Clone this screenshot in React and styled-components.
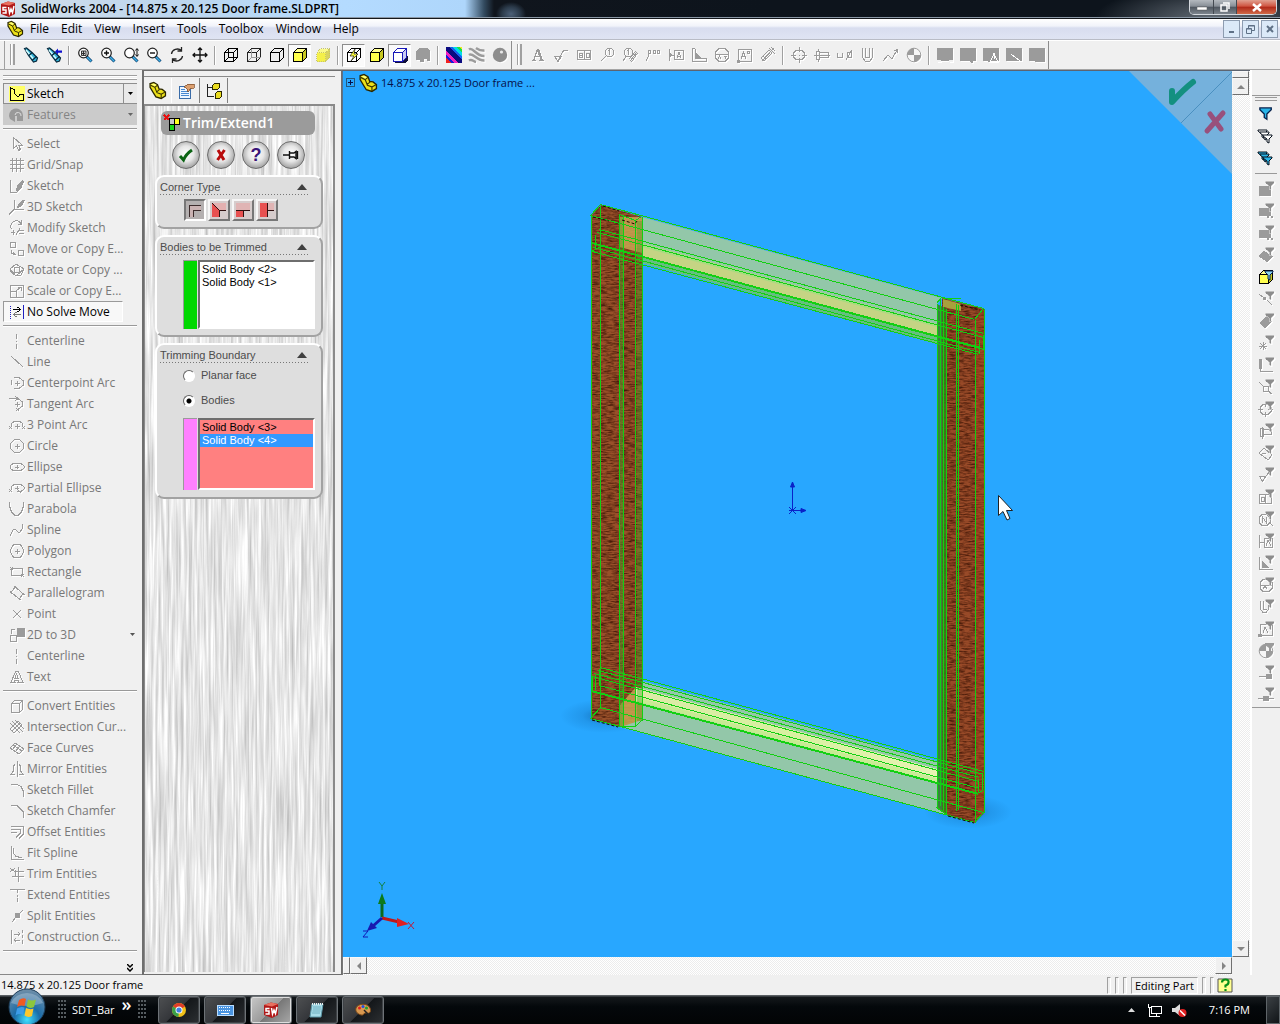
import React, { useState } from 'react';
import styled, { createGlobalStyle, css } from 'styled-components';

const ui = '"Open Sans", "Noto Sans", sans-serif';
const classic = '"Liberation Sans", Arial, sans-serif';

const GlobalStyle = createGlobalStyle`
  *, *::before, *::after { box-sizing: border-box; }
  html, body { margin: 0; padding: 0; }
  body { background: #f0f0f0; font: 12px/16px ${ui}; color: #000; }
  button { font: inherit; color: inherit; background: none; border: 0; padding: 0; margin: 0; cursor: default; }
  ul { list-style: none; margin: 0; padding: 0; }
  h1, h2 { margin: 0; font: inherit; }
  svg { display: block; flex: none; }
`;

const Shell = styled.div`
  display: flex;
  flex-direction: column;
  min-height: 100vh;
  overflow: hidden;
`;

/* ---------- icons ---------- */

const IconSvg = styled.svg`
  width: ${p => p.$size}px;
  height: ${p => p.$size}px;
  overflow: visible;
  ${p => p.$off && css`filter: drop-shadow(1px 1px 0 #fff);`}
`;

const GREY = '#9b9b9b';

function Icon({ d, f, c = GREY, fc, w = 1, size = 16, off, crisp = true, children }) {
  return (
    <IconSvg viewBox="0 0 16 16" $size={size} $off={off} aria-hidden="true" shapeRendering={crisp ? 'crispEdges' : 'auto'}>
      {f && <path d={f} fill={fc || c} />}
      {d && <path d={d} fill="none" stroke={c} strokeWidth={w} />}
      {children}
    </IconSvg>
  );
}

const CUBE = 'M1.5 5.5h9v9h-9zM1.5 5.5l4-4h9l-4 4M14.5 1.5v9l-4 4';
const FUNNEL = 'M1 1h13v2l-5 5v6l-3 -2v-4l-5-5z';

function PartIcon({ size = 18 }) {
  return (
    <Icon size={size} crisp={false}>
      <path d="M1 1.500L4.500 .5l3.500 2 1.500 4L12.500 7l3 2.500v3.500l-4 2.500-5-1.500L4 10 1 5z" fill="#ece018" stroke="#2a2600" strokeWidth="1.200" />
      <path d="M1.500 3l4 2 2 5 4 1.500v3.500M5.500 5l2.500-2M7 9.500l3-2.500M11.500 11.500l3.500-2" fill="none" stroke="#3a3400" strokeWidth="1" />
      <path d="M2 2l2.500-.7 2.500 1.400L5.500 4z" fill="#ffff80" />
    </Icon>
  );
}

function Torch({ arrow }) {
  return (
    <Icon crisp={false}>
      <path d="M1.500 1.500l2-.5 5.500 4.500 5.500 5.500-1 3-3 1-5-6.500z" fill="#36b4d8" stroke="#06283c" strokeWidth="1.200" />
      <path d="M3 3l7.500 9" stroke="#d4fdff" strokeWidth="1.500" />
      <path d="M6 8.500l3-3M9 13.500l4.500-4" stroke="#06283c" strokeWidth="1.300" />
      {arrow && <path d="M9 4.500l3-3v2h4v2.200h-4v2z" fill="#1010d0" />}
    </Icon>
  );
}

function Lens({ kind }) {
  return (
    <Icon crisp={false}>
      <path d="M9.500 9.500l5 5" stroke="#0b3f70" strokeWidth="3" />
      <path d="M10 10l4.200 4.200" stroke="#3fb2e6" strokeWidth="1.500" />
      <circle cx="6.500" cy="6" r="4.800" fill="#fff" stroke="#222" strokeWidth="1.200" />
      {kind === 'fit' && <path d="M4.500 4h4.500v4.500H4.500zM5 6.500h3M6.500 4v4" fill="#ccc" stroke="#222" strokeWidth=".9" />}
      {kind === 'in' && <path d="M4 6h5M6.500 3.500v5" stroke="#111" strokeWidth="1.400" />}
      {kind === 'out' && <path d="M4 6h5" stroke="#111" strokeWidth="1.400" />}
      {kind === 'drag' && <path d="M14 2v7M12.500 3.500L14 1.500l1.500 2M12.500 7.500L14 9.500l1.500-2" fill="none" stroke="#111" />}
    </Icon>
  );
}

function Cube({ fill = '#fff', side, top, c = '#000', extra, shadow, dash }) {
  return (
    <Icon>
      {shadow && <path d="M3 16l2-3h6l5-5v5l-3 3z" fill="#10103c" />}
      <path d="M1.500 5.500h9v9h-9z" fill={fill} />
      <path d="M1.500 5.500l4-4h9l-4 4z" fill={top || fill} />
      <path d="M14.500 1.500v9l-4 4v-9z" fill={side || fill} />
      <path d={CUBE} fill="none" stroke={c} strokeDasharray={dash} />
      {extra}
    </Icon>
  );
}

const annotationIcons = {
  note: { f: 'M2 14v-1h1L7 2h2l4 11h1v1H9v-1h1.500l-1-3h-4l-1 3H6v1zM6 9h3L7.500 4.500z' },
  finish: { d: 'M1.500 9.500h7l-3.500 5zM5 14L10.500 3.500H15' },
  gtol: { d: 'M1.500 3.500h13v9h-13zM8 3.500v9M3 6h3v4H3zM3 8h3M10 6h3v4h-3z' },
  balloon: { d: 'M8.500 1.500h4l2 2v4l-2 2h-4l-2-2v-4zM9.500 4l1-1v5M6.500 9.500L2 14' },
  balloons: { d: 'M4.500 1.500h4l2 2v4l-2 2h-4l-2-2v-4zM5.500 4l1-1v5M4 9.500L1 14M8 14l7-9M9.500 15l6-9M7 12l7-8' },
  stacked: { d: 'M3.500 3.500h2v3h-2zM8.500 3.500h2v3h-2zM12.500 3.500h2v3h-2zM3.500 6v3L1 14' },
  datum: { d: 'M1.500 2v12M2 8h4M6.500 3.500h9v9h-9zM9 11l2-6 2 6M9.500 9h3', f: 'M2 6l3 2-3 2z' },
  weld: { d: 'M1.500 1.500v13H15v-3H5l-1-10z', f: 'M4 5l6 6H4z' },
  datumTarget: { d: 'M5 1.500h6l3.500 3.500v6L11 14.500H5L1.500 11V5zM1.500 7.500h13M4 12l1.500-3L7 12M9.500 9h3M11 9v3' },
  area: { d: 'M1.500 2.500h13v12h-13zM4 12l2.500-7L9 12M5 9h3M10.500 4.500h2v2h-2z', f: 'M0 13h3v3H0z' },
  cosmetic: { d: 'M1 11l8-8 3 3-8 8zM3 9l3 3M9 1l6 6M11 0l4 4M2 14l12-13' },
  center: { d: 'M5 3.500h6L13.500 6v4L11 12.500H5L2.500 10V6zM8 0v5M8 11v5M0 8h5M11 8h5M7.500 8h1' },
  bolt: { d: 'M2.500 4.500h3v8h-3zM5.500 5.500h9v5h-9zM0 8.500h16M4.500 2v3M4.500 12v3' },
  depth: { d: 'M.5 6v4h5V6M10 5.500h4.500v5H10zM9 13l6-10' },
  hole: { d: 'M2.500 1v9l2.500 4h5l2.500-4V1M5.500 1v9h4V1' },
  path: { d: 'M0 14l5-6 4 4 5-9M11 4l3-1.500L15 6' },
};

const Quadrant = ({ funnel }) => (
  <Icon off crisp={false}>
    <circle cx="8" cy="8" r="6.800" fill="#f6f6f6" stroke={GREY} strokeWidth="1" />
    <path d="M8 8V1.200A6.800 6.800 0 0 0 1.200 8zM8 8v6.800A6.800 6.800 0 0 0 14.800 8z" fill={GREY} />
    {funnel && <path d="M7 0h9v2l-3 3v4l-2-1V5L7 2z" fill={GREY} />}
  </Icon>
);

const blockShapes = ['', 'M9 13h5l-1 3h-2z', 'M5 14h6v1H5z', '', 'M6 14h10v1H6z'];

const toolbarGroups = [
  [<Torch />, <Torch arrow />],
  [
    <Lens kind="fit" />, <Lens kind="in" />, <Lens kind="drag" />, <Lens kind="out" />,
    <Icon c="#222" crisp={false} w={1.300} d="M2.500 7a6 5.500 0 0 1 10-3.500M13.500 9a6 5.500 0 0 1-10 3.500M12.500 0v4h-4M3.500 16v-4h4" />,
    <Icon c="#111" crisp={false} w={1.300} d="M8 1v14M1 8h14M6 3l2-2 2 2M6 13l2 2 2-2M3 6L1 8l2 2M13 6l2 2-2 2" />,
  ],
  [
    <Cube fill="none" extra={<path d="M5.500 1.500v9h9M5.500 10.500l-4 4" fill="none" stroke="#000" />} />,
    <Cube fill="none" c="#222" extra={<path d="M5.500 1.500v9h9M5.500 10.500l-4 4" fill="none" stroke="#999" />} />,
    <Cube fill="none" />,
    { pressed: true, icon: <Cube fill="#ffff4a" side="#c8c820" top="#ffff90" /> },
    <Cube fill="#f4f04a" side="#d8d460" top="#fafa8c" c="#c6c46c" dash="1 1" />,
  ],
  [
    { pressed: true, icon: <Cube fill="#fff" extra={<path d="M9 2L4 9h4l-3 5 7-7H8z" fill="#ffff40" stroke="#000" strokeWidth=".6" shapeRendering="auto" />} /> },
    <Cube fill="#ffff4a" side="#c8c820" top="#ffff90" />,
    { pressed: true, icon: <Cube shadow c="#1818b8" fill="#fff" side="#c8ccf4" /> },
    <Icon off f="M1 4l4-3h7l3 3v10h-3v-2H9v3H5v-2H1z" />,
  ],
  [
    <Icon>
      <path d="M0 0h16v16H0z" fill="#f020c0" />
      <path d="M0 0h3l13 13v3h-3L0 4z" fill="#0b0b80" />
      <path d="M3 0h3l10 9v4z" fill="#1860f0" /><path d="M6 0h4l6 6v3z" fill="#00d8e8" />
      <path d="M10 0h3l3 3v3z" fill="#20e040" /><path d="M13 0h3v3z" fill="#f0e820" />
      <path d="M0 8l8 8H5L0 11z" fill="#1818d8" /><path d="M0 11l5 5H0z" fill="#f02020" />
    </Icon>,
    <Icon off crisp={false} w={2.500} d="M0 2.500c4-3 7 7 15.500 6.500M0 8c4-3 7 6 15.500 5.500M0 13.500c3-2 4 1 7 1.500M7 1c3 2 4 3 8.500 2.500" />,
    <Icon off crisp={false}><circle cx="8" cy="8" r="7.200" fill="#8d8d8d" /><circle cx="9.500" cy="5" r="1.600" fill="#e8e8e8" /></Icon>,
  ],
];

const annotationGroups = [
  ['note', 'finish', 'gtol', 'balloon', 'balloons', 'stacked', 'datum', 'weld', 'datumTarget', 'area', 'cosmetic'],
  ['center', 'bolt', 'depth', 'hole', 'path', 'quadrant'],
];

/* ---------- title bar ---------- */

const TitleBar = styled.header`
  display: flex;
  justify-content: space-between;
  height: 19px;
  padding: 0 3px 0 0;
  border-bottom: 1px solid #14181c;
  box-shadow: inset 0 -1px 0 #8b98a6;
  background:
    radial-gradient(ellipse 15px 12px at 511px 14px, #4c6078 0, #2b3a4a 60%, transparent 100%),
    radial-gradient(ellipse 120px 36px at 1214px 20px, rgba(150,160,170,.65) 0, transparent 100%),
    linear-gradient(90deg, #d2deea 0, #bcd6ee 180px, #b4dbff 345px, #aed6fb 465px, #334b60 484px, #10151d 494px, #0d141c 60%);
`;
const TitleText = styled.h1`
  display: flex;
  align-items: center;
  gap: 5px;
  height: 18px;
  font-size: 12px;
  font-weight: 600;
  white-space: nowrap;
`;
const WindowButtons = styled.div`
  display: flex;
  height: 15px;
  border: 1px solid #d3d8dd;
  border-top: 0;
  border-radius: 0 0 5px 5px;
  overflow: hidden;
`;
const WindowButton = styled.button`
  display: grid;
  place-items: center;
  width: ${p => (p.$close ? 40 : 23)}px;
  background: ${p => (p.$close
    ? 'linear-gradient(#e0a090 0, #cf5440 45%, #b02818 50%, #d06a48)'
    : 'linear-gradient(#b4b9bf 0, #878e96 45%, #4f565f 50%, #7d858d)')};
  & + & { border-left: 1px solid #434950; }
`;

/* ---------- menu bar ---------- */

const MenuBar = styled.nav`
  display: flex;
  align-items: center;
  height: 21px;
  padding: 0 2px 0 7px;
  background: linear-gradient(#fff 0, #f1f3fa 35%, #d8ddef 45%, #dfe4f3);
  border-bottom: 1px solid #b9bcc6;
`;
const MenuItems = styled.div`
  display: flex;
  flex: 1;
  gap: 12px;
  padding-left: 7px;
`;
const MdiButtons = styled.div`
  display: flex;
  gap: 2px;
`;
const MdiButton = styled.button`
  display: grid;
  place-items: center;
  width: 17px;
  height: 18px;
  border: 1px solid #8d9cb0;
  background: #dbe9f8;
`;

/* ---------- tool bar ---------- */

const ToolRow = styled.div`
  display: flex;
  height: 30px;
  border-top: 1px solid #fff;
  border-bottom: 1px solid #a5a5a5;
  padding-left: 4px;
`;
const ToolBar = styled.div`
  display: flex;
  align-items: center;
  padding-left: 14px;
  border-right: 1px solid #8c8c8c;
  border-left: ${p => (p.$first ? 1 : 0)}px solid #a0a0a0;
  position: relative;
  &::before {
    content: '';
    position: absolute;
    left: 5px;
    top: 3px;
    width: 5px;
    height: 21px;
    border: solid #a0a0a0;
    border-width: 0 1px;
    background: linear-gradient(90deg, #fff 1px, transparent 1px 2px, #a0a0a0 2px 3px, transparent 3px);
  }
`;
const ToolButton = styled.button`
  display: grid;
  place-items: center;
  width: 23px;
  height: 23px;
  border: 1px solid transparent;
  ${p => p.$pressed && css`
    border-color: #8c8c8c #fff #fff #8c8c8c;
    background: #fafafa;
  `}
`;
const ToolSep = styled.span`
  width: 8px;
  height: 19px;
  background: linear-gradient(90deg, transparent 3px, #a0a0a0 3px 4px, #fff 4px 5px, transparent 5px);
`;

/* ---------- body ---------- */

const Body = styled.main`
  display: flex;
  flex: 1;
`;

const Sidebar = styled.aside`
  display: flex;
  flex-direction: column;
  width: 142px;
  padding: 5px 5px 0 3px;
  border-bottom: 1px solid #888;
`;
const Grip = styled.div`
  height: 5px;
  margin-bottom: 3px;
  border: solid #a0a0a0;
  border-width: 1px 0;
  background: linear-gradient(#fff 1px, transparent 1px 2px, #fff 2px);
`;
const Tab = styled.div`
  display: flex;
  height: 21px;
  background: ${p => (p.$on ? '#e9e9e9' : '#cbcbcb')};
  color: ${p => (p.$on ? '#000' : '#848484')};
  border: solid ${p => (p.$on ? '#8e8e8e' : '#cbcbcb')};
  border-width: 1px 0 1px 1px;
  & > button:first-child { flex: 1; display: flex; align-items: center; gap: 2px; padding-left: 5px; }
  & > button:last-child {
    display: grid;
    place-items: center;
    width: 14px;
    border-left: 1px solid ${p => (p.$on ? '#8e8e8e' : 'transparent')};
  }
`;
const Rule = styled.hr`
  width: 100%;
  height: 2px;
  margin: 3px 0;
  border: 0;
  border-top: 1px solid #999;
  border-bottom: 1px solid #fff;
`;
const CommandList = styled.ul``;
const Command = styled.button`
  display: flex;
  align-items: center;
  width: 100%;
  height: 21px;
  gap: 2px;
  padding: 0 2px 0 6px;
  color: #787878;
  white-space: nowrap;
  & > span { flex: 1; text-align: left; }
  ${p => p.$on && css`
    width: 120px;
    color: #000;
    border: 1px solid #fff;
    border-color: #9a9a9a #fff #fff #9a9a9a;
    background: #f8f8f8;
    padding-left: 5px;
  `}
`;
const More = styled.button`
  align-self: flex-end;
  margin-top: auto;
  width: 14px;
  height: 12px;
  display: grid;
  place-items: center;
`;

/* ---------- property manager ---------- */

const Manager = styled.section`
  display: flex;
  flex-direction: column;
  width: 200px;
  padding: 5px 6px 2px 0;
  border: solid #6e6e6e;
  border-width: 1px 1px 1px 2px;
  background: #f0f0f0;
`;
const ManagerTabs = styled.div`
  display: flex;
  align-items: center;
  height: 28px;
  border-top: 1px solid #8a8a8a;
`;
const ManagerTab = styled.button`
  display: grid;
  place-items: center;
  width: 28px;
  height: 25px;
  border-right: 1px solid ${p => (p.$edge ? '#808080' : '#fff')};
`;
const Metal = styled.div`
  position: relative;
  flex: 1;
  border: solid #8a8a8a;
  border-width: 2px 2px 0 1px;
  background: #e6e6e6;
  padding: 5px 10px 0 12px;
`;
const Texture = styled.svg`
  position: absolute;
  inset: 0;
  width: 100%;
  height: 100%;
`;
const ManagerContent = styled.div`
  position: relative;
  display: flex;
  flex-direction: column;
  gap: 6px;
`;
const Feature = styled.h2`
  display: flex;
  align-items: center;
  gap: 3px;
  height: 24px;
  margin: 0 8px 0 4px;
  padding-left: 3px;
  border-radius: 6px;
  background: #9b9b9b;
  color: #fff;
  font: 600 14px/20px ${ui};
`;
const Actions = styled.div`
  display: flex;
  gap: 7px;
  padding-left: 15px;
`;
const RoundButton = styled.button`
  display: grid;
  place-items: center;
  width: 28px;
  height: 28px;
  border: 1px solid #6c6c6c;
  border-radius: 50%;
  background: radial-gradient(circle at 50% 45%, #fff 0, #e6e6e6 40%, #a2a2a2 75%, #777 100%);
  font: bold 18px/20px ${classic};
  color: #3a1478;
`;
const Group = styled.section`
  height: ${p => p.$height}px;
  padding: 2px 6px 0 3px;
  border: 2px solid #fff;
  border-color: #fff #a2a2a2 #a2a2a2 #fff;
  border-radius: 9px;
  background: #dedede;
  margin-left: -2px;
  font: 11px/13px ${classic};
  color: #4c4c4c;
`;
const GroupHeader = styled.button`
  display: flex;
  justify-content: space-between;
  align-items: center;
  width: 100%;
  height: 16px;
  padding: 0 8px 0 0;
  background: repeating-linear-gradient(90deg, #777 0 1px, transparent 1px 3px) left bottom / 148px 1px no-repeat;
`;
const CornerRow = styled.div`
  display: flex;
  gap: 2px;
  padding: 4px 0 0 24px;
`;
const CornerButton = styled.button`
  display: grid;
  place-items: center;
  width: 22px;
  height: 22px;
  border: 2px solid;
  border-color: ${p => (p.$on ? '#777 #fff #fff #777' : '#f6f6f6 #777 #777 #f6f6f6')};
  background: ${p => (p.$on ? '#b4b0b0' : '#d6cccc')};
`;
const Selection = styled.div`
  display: flex;
  gap: 1px;
  height: ${p => p.$height}px;
  margin: 5px 0 0 23px;
`;
const Swatch = styled.span`
  width: 14px;
  background: ${p => p.$color};
  border: solid #9a9a9a;
  border-width: 1px 0 0 1px;
`;
const ListBox = styled.ul`
  flex: 1;
  padding: 1px 0;
  border: 2px solid;
  border-color: #6e6e6e #fff #fff #6e6e6e;
  background: ${p => p.$color};
  color: #000;
`;
const ListOption = styled.li`
  height: 13px;
  padding-left: 2px;
  ${p => p.$on && css`background: #3399ff; color: #fff;`}
`;
const Choice = styled.label`
  display: flex;
  align-items: center;
  gap: 6px;
  height: 25px;
  padding-left: 23px;
`;
const Radio = styled.input`
  appearance: none;
  width: 12px;
  height: 12px;
  margin: 0;
  border: 1px solid;
  border-color: #666 #fff #fff #666;
  border-radius: 50%;
  background: #fff;
  &:checked { background: radial-gradient(circle, #000 0 2px, #fff 3px); }
`;

/* ---------- viewport ---------- */

const ViewArea = styled.section`
  flex: 1;
  display: grid;
  grid-template: minmax(0, 1fr) 18px / minmax(0, 1fr) 18px;
  min-width: 0;
  border-top: 1px solid #5d6470;
`;
const Canvas = styled.div`
  position: relative;
  overflow: hidden;
  border-left: 1px solid #58708c;
  background: #28a7ff;
`;
const Scene = styled.svg`
  position: absolute;
  inset: 0;
  width: 100%;
  height: 100%;
`;
const TreeRoot = styled.div`
  position: relative;
  display: flex;
  align-items: center;
  gap: 4px;
  height: 23px;
  padding-left: 3px;
  font-size: 11px;
  color: #06104a;
`;
const Expander = styled.button`
  display: grid;
  place-items: center;
  width: 9px;
  height: 9px;
  border: 1px solid #23587c;
`;
const Confirm = styled.svg`
  position: absolute;
  top: 0;
  right: 0;
  width: 103px;
  height: 103px;
`;
const hatch = 'repeating-conic-gradient(#fff 0 25%, #ececec 0 50%) 0 0 / 2px 2px';
const ScrollV = styled.div`
  display: flex;
  flex-direction: column;
  justify-content: space-between;
  background: ${hatch};
  padding-right: 1px;
`;
const ScrollH = styled.div`
  display: flex;
  justify-content: space-between;
  background: ${hatch};
  border-left: 1px solid #777;
`;
const ScrollButton = styled.button`
  display: grid;
  place-items: center;
  width: 17px;
  height: 17px;
  border: 1px solid;
  border-color: #f8f8f8 #707070 #707070 #f8f8f8;
  background: #f0f0f0;
`;
const Split = styled.span`
  width: ${p => (p.$v ? 17 : 7)}px;
  height: ${p => (p.$v ? 7 : 17)}px;
  border: 1px solid;
  border-color: #f8f8f8 #707070 #707070 #f8f8f8;
  background: #f0f0f0;
`;
const ScrollStart = styled.div`
  display: flex;
  flex-direction: ${p => (p.$v ? 'column' : 'row')};
`;

/* ---------- filter strip ---------- */

const FilterStrip = styled.aside`
  width: 30px;
  border-left: 2px solid #fff;
`;
const FilterSet = styled.div`
  display: flex;
  flex-direction: column;
  align-items: center;
  margin-top: 25px;
  padding-bottom: 1px;
  border: solid #999;
  border-width: 1px 0;
`;
const FilterButton = styled.button`
  display: grid;
  place-items: center;
  width: 22px;
  height: 22px;
`;
const FilterGrip = styled.span`
  width: 22px;
  height: 4px;
  margin: 1px 0 2px;
  border: solid #999;
  border-width: 1px 0;
`;
const FilterRule = styled.span`
  width: 22px;
  height: 9px;
  background: linear-gradient(transparent 4px, #999 4px 5px, transparent 5px);
`;

/* ---------- status bar and task bar ---------- */

const StatusBar = styled.footer`
  display: flex;
  align-items: center;
  height: 20px;
  padding: 0 46px 0 1px;
  background: #f0f0f0;
  font-size: 11px;
  & > span:first-child { flex: 1; }
`;
const StatusCells = styled.div`
  display: flex;
  gap: 4px;
  align-items: center;
`;
const StatusCell = styled.span`
  height: 17px;
  min-width: 4px;
  padding: 0 ${p => (p.$text ? 3 : 0)}px;
  border: 1px solid;
  border-color: #a0a0a0 #fff #fff #a0a0a0;
`;
const TaskBar = styled.footer`
  display: flex;
  align-items: center;
  height: 29px;
  background: linear-gradient(#5a5f63 0 1px, #15191c 2px, #04080b 40%, #020405);
  color: #fff;
`;
const StartButton = styled.button`
  width: 54px;
  height: 29px;
  margin-right: 4px;
  display: flex;
  align-items: flex-end;
  justify-content: center;
`;
const Dots = styled.span`
  width: 8px;
  height: 20px;
  background: radial-gradient(circle at 1px 1px, #555c60 1px, transparent 1px) 0 0 / 3px 4px;
`;
const BarLabel = styled.span`
  display: flex;
  align-items: center;
  gap: 7px;
  padding: 0 6px;
  font-size: 11px;
  & > b { font: 600 18px/16px ${ui}; margin-top: -12px; }
`;
const Tasks = styled.div`
  display: flex;
  flex: 1;
  gap: 4px;
  padding-left: 12px;
`;
const TaskButton = styled.button`
  display: grid;
  place-items: center;
  width: 42px;
  height: 28px;
  border: 1px solid #6d7276;
  border-radius: 3px;
  background: ${p => (p.$on
    ? 'linear-gradient(135deg, #c8c8c8 0, #9b9b9b 50%, #777 51%, #a8a8a8)'
    : 'linear-gradient(135deg, #4e5052 0, #34363a 48%, #14171a 50%, #2c2f32)')};
  box-shadow: inset 0 0 0 1px ${p => (p.$on ? '#ddd' : '#3e4246')};
`;
const Tray = styled.div`
  display: flex;
  align-items: center;
  gap: 8px;
  & > svg:first-child { margin-right: 4px; }
`;
const Clock = styled.time`
  padding: 0 8px 0 14px;
  font-size: 11px;
`;
const ShowDesktop = styled.button`
  width: 14px;
  height: 28px;
  border: 1px solid #5e6468;
  background: linear-gradient(135deg, #3b4044, #111518);
`;

/* ---------- data ---------- */

const sketchTools = [
  ['Select', { d: 'M4.500 1.500v11l3-3 2 5 2-1-2-4.500h3.500z' }],
  ['Grid/Snap', { d: 'M3.500 1v14M7.500 1v14M11.500 1v14M1 3.500h14M1 7.500h14M1 11.500h14' }],
  ['Sketch', { d: 'M1.500 2v12.500H8M8 13L13 3', f: 'M7 13l1-5 5-6 2 2-3 7-4 3z' }],
  ['3D Sketch', { d: 'M5.500 1v9h9M5.500 10L0 15.500', f: 'M8 9l1-4 4-4h3l-2 4-3 3z' }],
  ['Modify Sketch', { d: 'M2.500 9a5 5 0 0 1 9.500-5.500M12.500 0v4h-4M2 12h4M4 10v5M7 15l4-7M10 10h5M10 13h5' }],
  ['Move or Copy E...', { d: 'M1.500 1.500h5v5h-5zM9.500 9.500h5v5h-5zM2.500 9v3l4 2M4 11l3 3' }],
  ['Rotate or Copy ...', { d: 'M1 7l6-5 8 5-3 6-5 1-5-4zM5.500 5.500h5v5h-5zM1 7l6 7M15 7L7 14' }],
  ['Scale or Copy E...', { d: 'M1.500 2.500h13v12h-13zM1.500 8.500h6v6M7 8l5-4M9 4.500h3.500V8' }],
  ['No Solve Move', { on: true }],
];
const entityTools = [
  ['Centerline', { d: 'M7.500 1v5M7.500 8v1M7.500 11v5' }],
  ['Line', { d: 'M2 2l12 11' }],
  ['Centerpoint Arc', { d: 'M5 2.500h5M2.500 5v5M5 13.500h5M10 2.500l4 3v5l-4 3M5.500 8h5M8 5.500v5' }],
  ['Tangent Arc', { d: 'M0 2.500h9l4 3v5l-4 3M5.500 8h5M8 5.500v5M6 0l3 2.500L6 5M7 12l3 3M7 15l3-3' }],
  ['3 Point Arc', { d: 'M2 10l1-4 3-2h4l3 2 1 4M5.500 9h5M8 6.500v5M0 9l3 3M0 12l3-3M13 9l3 3M13 12l3-3' }],
  ['Circle', { d: 'M5.500 1.500h5l4 4v5l-4 4h-5l-4-4v-5zM5.500 8h5M8 5.500v5' }],
  ['Ellipse', { d: 'M4 4.500h8l3 2.500v2l-3 2.500H4L1 9V7zM6 8h4M8 6v4' }],
  ['Partial Ellipse', { d: 'M2 10V7l3-2.500h7l3 2.500v2l-3 2.500H8M6 8h4M8 6v4M0 9l3 3M0 12l3-3M9 10l3 3' }],
  ['Parabola', { d: 'M.5 1v4l2 6 3 3h4l3-3 2-6V1' }],
  ['Spline', { d: 'M1 14l3-6 2-1 3 3h2l2-3 1-5' }],
  ['Polygon', { d: 'M4.500 1.500h7l3.500 6.500-3.500 6.500h-7L1 8zM5.500 8h5M8 5.500v5' }],
  ['Rectangle', { d: 'M2.500 4.500h11v7h-11zM1 3l3 3M1 6l3-3M12 10l3 3M12 13l3-3' }],
  ['Parallelogram', { d: 'M6.500 2L14 9l-4 5-8-7zM5 1l3 2M13 8l3 2M9 13l3 2M1 6l2 3' }],
  ['Point', { d: 'M4 4l8 8M12 4l-8 8' }],
  ['2D to 3D', { d: 'M1.500 8.500h6v6h-6zM2.500 7V3l3-1', f: 'M8 1h8v9H8z', drop: true }],
  ['Centerline', { d: 'M7.500 1v5M7.500 8v1M7.500 11v5' }],
  ['Text', { d: 'M2 13.500h4L5 11h5l-1 2.500h5L9.500 2.500h-3zM6 9h3L7.500 5z' }],
];
const editTools = [
  ['Convert Entities', { d: 'M2.500 5.500h8v9h-8zM2.500 5.500l3-3h8l-3 3M13.500 2.500v9l-3 3' }],
  ['Intersection Cur...', { d: 'M1 10l8-8 4 4-8 8zM3 2l11 11M6 1l9 9M1 4l10 10M3 12l8-8' }],
  ['Face Curves', { d: 'M1 8l5-5 9 6-5 5zM4 5l9 6M6 12l5-6M3 10l5-6' }],
  ['Mirror Entities', { d: 'M8 0v16M6 3.500L4.500 5v5l-3 3.500H6M10 3.500l1.500 1.500v5l3 3.500H10' }],
  ['Sketch Fillet', { d: 'M2 2.500h6l4 2 2 4v6' }],
  ['Sketch Chamfer', { d: 'M2 2.500h6l6 6v6' }],
  ['Offset Entities', { d: 'M2 2.500h12v8l-4 4M2 5.500h9v4l-4 4M2 8h6' }],
  ['Fit Spline', { d: 'M2.500 1v13.500H15M4.500 3v5l2 3 6 2' }],
  ['Trim Entities', { d: 'M1 2l5 4M1 6l5-4M9.500 1v15M6 5.500h9M3 10.500h12M6.500 4v7' }],
  ['Extend Entities', { d: 'M1 2.500h15M8.500 3v3M8.500 8v2M8.500 11v4' }],
  ['Split Entities', { d: 'M3 14l4-5M10 6l4-4', f: 'M6 5h5v5H6z' }],
  ['Construction G...', { d: 'M2.500 1v14M13.500 1v3M13.500 6v3M13.500 11v4M5 5h6M9 3l2 2-2 2M11 11H5M7 9l-2 2 2 2' }],
];

const filterMarks = [
  { f: 'M1 5h12v10H1z' }, { f: 'M1 5h12v8H1zM9 13h2v2H9zM13 13h2v2h-2z' }, { f: 'M1 5h12v8H1zM9 13h2v2H9zM13 13h2v2h-2z' }, { f: 'M0 9l6-5 9 5-6 6z' },
  null,
  { d: 'M1 3l5 4M9 9l5 5', f: 'M5 6h3v3H5z' }, { f: 'M1 10l7-7 6 6-7 6z' }, { d: 'M1 11h8M5 7v8M2 8l6 6M8 8l-6 6' },
  { d: 'M2 2v12H15', f: 'M1 2h3v10H1z' }, { d: 'M1 3l4 4M10 12l4 3M5.500 7.500h5v5h-5z' },
  { d: 'M5 3.500h5l3 3v4l-3 3H5l-3-3v-4zM7.500 1v5M7.500 11v5M0 8.500h5M10 8.500h5' }, { d: 'M2.500 5.500h3v8h-3zM5.500 6.500h8v5h-8zM4 4v12' },
  { d: 'M1 8l5-5 8 7-4 5zM4 8h4' }, { d: 'M1.500 9.500h6l-3 5zM6 12l5-7' }, { d: 'M1.500 5.500h12v9h-12zM7.500 5v9M3 8h3v4H3z' },
  { d: 'M4 3.500h5l3 3v5l-3 3H4l-3-3v-5zM4.500 12V6l4 6V6M12 12l3 3' }, { d: 'M1.500 2v13M2 9h4M6.500 5.500h8v9h-8zM8 13l2-6 3 6' },
  { d: 'M1.500 2v12.500H15', f: 'M4 6l7 7H4z' }, { d: 'M5 2.500h6l3 3v6l-3 3H5l-3-3v-6zM2 8h12M5 12l2-3 2 3' },
  { d: 'M2.500 2v8l2 3h4l2-3V6M5.500 2v8h3' }, { d: 'M2.500 3.500h12v11h-12zM5 12l2-6 3 6', f: 'M0 13h4v3H0z' },
  'quadrant', { d: 'M1 11.500h7', f: 'M8 9h6v5H8z' }, { d: 'M0 11.500h16', f: 'M5 9h6v5H5z' },
];

/* ---------- drawings ---------- */

const line = (x1, y1, x2, y2) => `M${x1} ${y1}L${x2} ${y2}`;

function DoorFrame() {
  const uprights = [
    [591, 216, 719], [600, 206, 709], [619, 215, 727], [623, 217, 726], [635, 221, 727],
    [642, 217, 721],
    [937, 304, 808], [940, 298, 806], [943, 307, 811], [946, 309, 815], [956, 304, 811], [958, 305, 810],
    [975, 320, 823], [984, 309, 813],
  ].map(([x, a, b]) => line(x, a, x, b)).join('');
  const rails = [
    [601, 205, 984, 309], [591, 216, 975, 320], [600, 230, 984, 334], [598, 233, 984, 338],
    [592, 243, 981, 348], [593, 244, 981, 349],
    [600, 246, 984, 350], [594, 248, 980, 353], [593, 252, 979, 355],
    [601, 668, 984, 772], [599, 671, 984, 775], [595, 674, 980, 778], [593, 677, 979, 782],
    [600, 686, 980, 789], [592, 691, 979, 794], [592, 692, 979, 795], [601, 708, 984, 813], [591, 719, 975, 823],
  ].map(a => line(...a)).join('');
  return (
    <Scene aria-label="Door frame model">
      <defs>
        <filter id="wood" x="0" y="0" width="100%" height="100%" colorInterpolationFilters="sRGB">
          <feTurbulence type="fractalNoise" baseFrequency=".14 .7" numOctaves="3" seed="4" />
          <feColorMatrix values="0 0 0 0 .24  0 0 0 0 .08  0 0 0 0 .02  1.800 0 0 0 -.65" />
          <feComposite in2="SourceGraphic" operator="in" result="grain" />
          <feMerge><feMergeNode in="SourceGraphic" /><feMergeNode in="grain" /></feMerge>
        </filter>
        <linearGradient id="glow" x1="0" y1="0" x2="1" y2="0">
          <stop offset="0" stopColor="#dceaa8" /><stop offset=".5" stopColor="#d8f0a0" /><stop offset="1" stopColor="#e8f2b4" />
        </linearGradient>
        <radialGradient id="shade"><stop offset="0" stopColor="#0a4a86" stopOpacity=".6" /><stop offset=".5" stopColor="#0a5aa0" stopOpacity=".2" /><stop offset="1" stopColor="#0a5aa0" stopOpacity="0" /></radialGradient>
      </defs>
      <g transform="translate(-343 -71)">
        <ellipse cx="604" cy="716" rx="44" ry="17" fill="url(#shade)" />
        <ellipse cx="968" cy="812" rx="44" ry="17" fill="url(#shade)" />

        <path d="M591 216L601 205 642 217V721L636 727H620L591 719z" fill="#98502a" filter="url(#wood)" />
        <path d="M942 298L984 309V813L975 823 942 813z" fill="#984a28" filter="url(#wood)" />
        <path d="M975 320l9-11v504l-9 10z" fill="#a8481c" opacity=".4" />
        <path d="M620 217h22v36l-22-6zM620 705l16-18 6 4v30l-6 6h-16z" fill="#c9a552" opacity=".85" />
        <path d="M943 299l18 5v7l-18-4z" fill="#a8a03c" />

        <path d="M642 217L942 298 937 304V343L642 263z" fill="#93c7a9" />
        <path d="M642 243L937 324V328L642 248z" fill="#a5dc80" />
        <path d="M642 247L937 327V337L642 257z" fill="#c5d484" />
        <path d="M642 257L937 337V344L642 263z" fill="#66be80" />

        <path d="M642 681L937 761V805L947 815 620 727 642 720z" fill="#93c7a9" />
        <path d="M636 687L937 769V782L636 701z" fill="url(#glow)" />
        <path d="M636 697L937 778V783L636 702z" fill="#bfe88c" opacity=".7" />

        <path d="M619 217h5v509h-5z" fill="#46a428" opacity=".45" />
        <path d="M637 221h5v500h-5z" fill="#46a428" opacity=".4" />
        <path d="M937 304l10 5v506l-10-7z" fill="#3a7a1c" opacity=".85" />

        <g fill="none" stroke="#12d012" strokeWidth="1" shapeRendering="crispEdges" transform="translate(-.5 -.5)">
          <path d={uprights} transform="translate(1 0)" />
          <path d={rails} />
          <path d="M591 216L601 205M975 320l9-11M591 719l10-11M975 823l9-10M942 298l-5 6M620 727h16l6-6M947 815l-10-7M943 299h18M620 215l16 6 6-4" />
          <path d="M596 235v15l5-3v-17M592 243v8l4 1M980 340v14M984 335v15M593 677v13M596 675v15M600 669v17M979 779v14M983 773v18l-5 3" />
        </g>
        <path d="M603 206l16 5M593 217l16 4M622 220l13 4 2-3M960 305l20 5M592 720l26 7M948 816l26 7" stroke="#180800" strokeDasharray="3 2" fill="none" />

        <g fill="none" stroke="#0a22c8" strokeWidth="1">
          <path d="M792.500 510v-26M792 510.500h13M789 507l7 7M796 507l-7 7M789 510.500h4" shapeRendering="crispEdges" />
          <path d="M790.500 487l2-5 2 5zM801 508.500l5 2-5 2z" fill="#0a22c8" />
        </g>

        <g>
          <path d="M382 917v-14" stroke="#0c6a1c" strokeWidth="3" /><path d="M378 904l4-11 4 11z" fill="#0c7a1c" />
          <path d="M382 918l17 4" stroke="#c01818" strokeWidth="3" /><path d="M397 918l12 6-12 3z" fill="#e02020" />
          <path d="M382 918l-9 8" stroke="#1818b0" strokeWidth="3" /><path d="M367 931l4-9 6 6z" fill="#1818b0" />
          <g fill="none" strokeWidth="1">
            <path d="M379 882l3 4 3-4M382 886v4" stroke="#108040" />
            <path d="M408 922l6 7M414 922l-6 7" stroke="#c01838" />
            <path d="M363 931h5l-5 6h5" stroke="#1018b8" />
          </g>
        </g>

        <path d="M998.500 495.500v20l4.500-4 4 8.500 3-1.500-3.500-8h6z" fill="#fff" stroke="#222" />
      </g>
    </Scene>
  );
}

const corners = [
  <Icon><path d="M2.500 15V3.500H14M6.500 15V8.500H14" fill="none" stroke="#3c2c2c" strokeWidth="1" /><path d="M3 4h11v4H6v7H3z" fill="#d8b4b4" opacity=".6" /></Icon>,
  <Icon><path d="M1 1h14v7H8z" fill="#e4b0b0" /><path d="M1 1l7 7v7H1z" fill="#e85050" /><path d="M1 1l7 7h7M8 8v7" fill="none" stroke="#301010" /></Icon>,
  <Icon><path d="M1 1h14v7H1z" fill="#e0b4b4" /><path d="M1 8h7v7H1z" fill="#e85050" /><path d="M1 8h14M8 8v7" fill="none" stroke="#301010" /></Icon>,
  <Icon><path d="M8 1h7v7H8z" fill="#e0b4b4" /><path d="M1 1h7v14H1z" fill="#e85050" /><path d="M8 1v14M8 8h7" fill="none" stroke="#301010" /></Icon>,
];

const Caret = ({ c = '#000' }) => <svg width="5" height="3" aria-hidden="true"><path d="M0 0h5L2.500 3z" fill={c} /></svg>;
const Up = () => <svg width="10" height="6" aria-hidden="true"><path d="M0 6h10L5 0z" fill="#404040" /></svg>;
const arrows = { up: 'M0 6h8L4 2z', down: 'M0 2h8L4 6z', left: 'M6 0v8L2 4z', right: 'M2 0v8l4-4z' };
const ScrollArrow = ({ dir }) => (
  <ScrollButton aria-label={`Scroll ${dir}`}><svg width="8" height="8"><path d={arrows[dir]} fill="#858585" /></svg></ScrollButton>
);

function Commands({ items }) {
  return (
    <CommandList>
      {items.map(([label, { on, drop, ...icon }], i) => (
        <li key={i}>
          <Command $on={on}>
            {on ? (
              <Icon>
                <path d="M1.500 2v13" stroke="#2020c0" strokeDasharray="1 1" /><path d="M14.500 1v14" stroke="#2020c0" />
                <path d="M4 5.500h7M8.500 3l3 2.500-3 2.500" fill="none" stroke="#000" /><path d="M12 10.500H5M7.500 8l-3 2.500 3 2.500" fill="none" stroke="#777" />
              </Icon>
            ) : <Icon {...icon} off />}
            <span>{label}</span>
            {drop && <Caret c="#555" />}
          </Command>
        </li>
      ))}
    </CommandList>
  );
}

function ToolSet({ groups }) {
  return groups.map((group, g) => (
    <React.Fragment key={g}>
      {g > 0 && <ToolSep />}
      {group.map((t, i) => <ToolButton key={i} $pressed={t.pressed}>{t.icon || t}</ToolButton>)}
    </React.Fragment>
  ));
}

const annotationSet = annotationGroups
  .map(g => g.map(n => (n === 'quadrant' ? <Quadrant /> : <Icon off {...annotationIcons[n]} />)))
  .concat([[0, 1, 2, 3, 4].map(i => (
    <Icon off>
      <path d={`M0 1h16v13H0z${blockShapes[i] || ''}`} fill={GREY} />
      {i === 2 && <path d="M7.500 14.500l3.500-8 3.500 8zM11 9v3" fill="none" stroke="#fff" />}
      {i === 3 && <path d="M5 7l9 7" stroke="#fff" fill="none" />}
      {i === 0 && <path d="M0 13h4v2H0zM12 13h4v2h-4z" fill="#f0f0f0" />}
    </Icon>
  ))]);

function SelectionList({ name, color, swatch, height, items, selected }) {
  return (
    <Selection $height={height}>
      <Swatch $color={swatch} />
      <ListBox $color={color} role="listbox" aria-label={name}>
        {items.map(t => <ListOption key={t} role="option" aria-selected={t === selected} $on={t === selected}>{t}</ListOption>)}
      </ListBox>
    </Selection>
  );
}

const SwLogo = ({ size = 16 }) => (
  <Icon size={size} crisp={false}>
    <path d="M1 3l7-2.500L15 2v11l-6 3-8-3z" fill="#b01818" />
    <path d="M1 3l7-2.500L15 2 9 4.500z" fill="#e87060" />
    <path d="M6.500 6.500H3v2.500h3v3H2.500M8.500 6l1 6 1.500-4 1.500 3.500L14 5" fill="none" stroke="#fff" strokeWidth="1.500" />
  </Icon>
);

export default function App() {
  const [boundary, setBoundary] = useState('Bodies');
  return (
    <Shell>
      <GlobalStyle />
      <TitleBar>
        <TitleText><SwLogo />SolidWorks 2004 - [14.875 x 20.125 Door frame.SLDPRT]</TitleText>
        <WindowButtons>
          <WindowButton aria-label="Minimize"><svg width="10" height="8"><path d="M0 4h10v3H0z" fill="#fff" stroke="#555" strokeWidth=".5" /></svg></WindowButton>
          <WindowButton aria-label="Restore"><svg width="10" height="10"><path d="M3 1h6v6M1 3h6v6H1z" fill="none" stroke="#fff" strokeWidth="1.500" /></svg></WindowButton>
          <WindowButton $close aria-label="Close"><svg width="10" height="9"><path d="M1 1l8 7M9 1L1 8" stroke="#fff" strokeWidth="2.500" /></svg></WindowButton>
        </WindowButtons>
      </TitleBar>

      <MenuBar>
        <PartIcon size={16} />
        <MenuItems>
          {['File', 'Edit', 'View', 'Insert', 'Tools', 'Toolbox', 'Window', 'Help'].map(m => <button key={m}>{m}</button>)}
        </MenuItems>
        <MdiButtons>
          <MdiButton aria-label="Minimize document"><svg width="8" height="8"><path d="M1 6h5v2H1z" fill="#5f7187" /></svg></MdiButton>
          <MdiButton aria-label="Restore document"><svg width="9" height="9"><path d="M2.500 3V.5h6v5H6M.5 3.500h5v5h-5zM2.500 1h6M.5 4h5" fill="none" stroke="#5f7187" /></svg></MdiButton>
          <MdiButton aria-label="Close document"><svg width="8" height="8"><path d="M1 1l6 6M7 1L1 7" stroke="#5f7187" strokeWidth="2" /></svg></MdiButton>
        </MdiButtons>
      </MenuBar>

      <ToolRow>
        <ToolBar $first><ToolSet groups={toolbarGroups} /></ToolBar>
        <ToolBar><ToolSet groups={annotationSet} /></ToolBar>
      </ToolRow>

      <Body>
        <Sidebar>
          <Grip />
          <Tab $on>
            <button>
              <Icon><path d="M0 0h16v16H0z" fill="#ffff66" /><path d="M1.500 2v12.500h13v-6H11l-2 2.500-3-3-1-4.500z" fill="none" stroke="#000" /></Icon>
              Sketch
            </button>
            <button aria-label="Sketch toolbar options"><Caret /></button>
          </Tab>
          <Tab>
            <button>
              <Icon crisp={false}><path d="M1 12a7 7 0 1 1 13-4v6H8V9H6v6z" fill="#999" /><path d="M6 8a3 3 0 0 1 6 1" fill="none" stroke="#ddd" /></Icon>
              Features
            </button>
            <button aria-label="Features toolbar options"><Caret c="#666" /></button>
          </Tab>
          <Rule />
          <Commands items={sketchTools} />
          <Rule />
          <Commands items={entityTools} />
          <Rule />
          <Commands items={editTools} />
          <Rule />
          <More aria-label="More commands">
            <svg width="6" height="8"><path d="M0 0l3 3 3-3M0 4l3 3 3-3" fill="none" stroke="#000" strokeWidth="1.500" /></svg>
          </More>
        </Sidebar>

        <Manager>
          <ManagerTabs>
            <ManagerTab aria-label="Feature tree"><PartIcon size={17} /></ManagerTab>
            <ManagerTab $edge aria-label="Properties">
              <Icon>
                <path d="M1.500 3.500h11v12h-11z" fill="#eef6ff" stroke="#3a6ca8" />
                <path d="M3 8h8M3 10h8M3 12h8M3 6h4" stroke="#4888d0" />
                <path d="M6 4l4-3h6v4l-4 1-2 3-1-3z" fill="#dca070" stroke="#7a4a28" strokeWidth=".7" />
              </Icon>
            </ManagerTab>
            <ManagerTab $edge aria-label="Configurations">
              <Icon>
                <path d="M1.500 1v12H8M2 4.500h5" fill="none" stroke="#222" />
                <path d="M6.500 2.500l2-2h5v4l-2 2h-5zM9.500 10.500l2-2h4v5l-2 2h-4z" fill="#eadc20" stroke="#2a2600" />
              </Icon>
            </ManagerTab>
          </ManagerTabs>
          <Metal>
            <Texture aria-hidden="true">
              <filter id="brushed" x="0" y="0" width="100%" height="100%" colorInterpolationFilters="sRGB">
                <feTurbulence type="fractalNoise" baseFrequency=".36 .012" numOctaves="3" seed="9" />
                <feColorMatrix values=".4 0 0 0 .7  .4 0 0 0 .7  .4 0 0 0 .7  0 0 0 0 1" />
              </filter>
              <rect width="100%" height="100%" filter="url(#brushed)" />
            </Texture>
            <ManagerContent>
              <Feature>
                <Icon>
                  <path d="M5.500 4.500h5v5h-5zM5.500 9.500h5v6h-5z" fill="#18d818" stroke="#000" />
                  <path d="M6 3.500h9.500v6H6z" fill="#ffff20" stroke="#000" /><path d="M5.500 3.500h4.500v6H5.500z" fill="#c8c8c8" stroke="#000" />
                  <path d="M0 0l5 5M5 0L0 5" stroke="#e81010" strokeWidth="1.500" />
                </Icon>
                Trim/Extend1
              </Feature>
              <Actions>
                <RoundButton aria-label="OK"><Icon crisp={false} d="M2 9l3.500 4Q8 7 14 3" c="#0c6414" w={3} /></RoundButton>
                <RoundButton aria-label="Cancel"><Icon crisp={false} d="M5 3l6 10M11.500 3L4.500 13" c="#b80c0c" w={3} /></RoundButton>
                <RoundButton aria-label="Help">?</RoundButton>
                <RoundButton aria-label="Keep visible"><Icon crisp={false} d="M0 8h6M6.500 4v8M7 6h4l2-1.500v7L11 10H7M14.500 4v8" c="#111" w={1.400} /></RoundButton>
              </Actions>
              <Group $height={54}>
                <GroupHeader>Corner Type<Up /></GroupHeader>
                <CornerRow>
                  {corners.map((c, i) => <CornerButton key={i} $on={i === 0} aria-label={`Corner type ${i + 1}`}>{c}</CornerButton>)}
                </CornerRow>
              </Group>
              <Group $height={102}>
                <GroupHeader>Bodies to be Trimmed<Up /></GroupHeader>
                <SelectionList name="Bodies to be Trimmed" height={69} color="#fff" swatch="#00d800" items={['Solid Body <2>', 'Solid Body <1>']} />
              </Group>
              <Group $height={156}>
                <GroupHeader>Trimming Boundary<Up /></GroupHeader>
                {['Planar face', 'Bodies'].map(t => (
                  <Choice key={t}>
                    <Radio type="radio" name="boundary" checked={boundary === t} onChange={() => setBoundary(t)} />{t}
                  </Choice>
                ))}
                <SelectionList name="Trimming Boundary" height={72} color="#ff8080" swatch="#ff80ff" items={['Solid Body <3>', 'Solid Body <4>']} selected="Solid Body <4>" />
              </Group>
            </ManagerContent>
          </Metal>
        </Manager>

        <ViewArea>
          <Canvas>
            <DoorFrame />
            <TreeRoot>
              <Expander aria-label="Expand"><svg width="5" height="5"><path d="M0 2.500h5M2.500 0v5" stroke="#06104a" /></svg></Expander>
              <PartIcon size={18} />
              14.875 x 20.125 Door frame ...
            </TreeRoot>
            <Confirm viewBox="0 0 103 103" aria-label="Confirmation corner">
              <path d="M0 0h103v103z" fill="#75b1dc" />
              <path d="M52 52L103 1" stroke="#4a90c0" />
              <path d="M43 20v11Q55 18 64 11" fill="none" stroke="#149080" strokeWidth="6" strokeLinecap="round" strokeLinejoin="round" />
              <path d="M81 43l11 15M94 42L78 60" fill="none" stroke="#98507c" strokeWidth="5" strokeLinecap="round" />
            </Confirm>
          </Canvas>
          <ScrollV>
            <ScrollStart $v><Split $v /><ScrollArrow dir="up" /></ScrollStart>
            <ScrollArrow dir="down" />
          </ScrollV>
          <ScrollH>
            <ScrollStart><Split /><ScrollArrow dir="left" /></ScrollStart>
            <ScrollArrow dir="right" />
          </ScrollH>
        </ViewArea>

        <FilterStrip>
          <FilterSet>
            <FilterGrip />
            <FilterButton aria-label="Toggle filter"><Icon size={14} crisp={false}><path d={FUNNEL} fill="#28b4e8" stroke="#06204c" strokeWidth="1.500" /></Icon></FilterButton>
            {['#fff', '#28b4e8'].map(c => (
              <FilterButton key={c} aria-label="Filter set">
                <Icon crisp={false}>
                  {[0, 2, 5].map(o => <path key={o} transform={`translate(${o} ${o + 1})`} d="M0 1h9v1L6 5v4L4 8V5L0 2z" fill={c} stroke="#06101c" />)}
                </Icon>
              </FilterButton>
            ))}
            <FilterRule />
            {filterMarks.map((m, i) => (
              <FilterButton key={i} aria-label={`Filter ${i + 1}`}>
                {m === null && <Cube fill="#ffff50" side="#c8c820" top="#ffff90" extra={<path d="M7 2h8v1l-3 3v5l-2-1V6L7 3z" fill="#8cd4f0" stroke="#06204c" shapeRendering="auto" />} />}
                {m === 'quadrant' && <Quadrant funnel />}
                {m && m !== 'quadrant' && <Icon off {...m}><path d="M7 0h9v2l-3 3v4l-2-1V5L7 2z" fill="#8c8c8c" stroke="#f0f0f0" strokeWidth=".5" /></Icon>}
              </FilterButton>
            ))}
          </FilterSet>
        </FilterStrip>
      </Body>

      <StatusBar>
        <span>14.875 x 20.125 Door frame</span>
        <StatusCells>
          <StatusCell /><StatusCell /><StatusCell />
          <StatusCell $text>Editing Part</StatusCell>
          <StatusCell /><StatusCell />
          <Icon crisp={false}><path d="M0 2h14v13H0z" fill="#ffff90" stroke="#555" /><path d="M4 5.500q0-3 3.500-3t3 3q0 2-3 3v2M7.500 12v2" fill="none" stroke="#089018" strokeWidth="2.200" /></Icon>
        </StatusCells>
      </StatusBar>

      <TaskBar>
        <StartButton aria-label="Start">
          <svg width="38" height="36" viewBox="0 0 38 36">
            <defs><radialGradient id="orb" cx=".5" cy=".85" r=".8"><stop offset="0" stopColor="#40e0ff" /><stop offset=".45" stopColor="#1a6ca8" /><stop offset="1" stopColor="#6a8ca8" /></radialGradient></defs>
            <circle cx="19" cy="19" r="18" fill="url(#orb)" stroke="#1c3c58" />
            <path d="M3 15a17 15 0 0 1 32 0q-16 6-32 0z" fill="#fff" opacity=".25" />
            <path d="M11 12q4-3 7-1l-1.500 7q-4-1.500-7.500 1z" fill="#f05a22" />
            <path d="M20 11.500q4 2 8 0L26 19q-4 2-7.500-.5z" fill="#8cc63c" />
            <path d="M9 20.500q4-2.500 7.500-1L15 27q-4-2-7.500.5z" fill="#3c9ce8" />
            <path d="M18 20q4 2 7.500.5L24 28q-4 2-7.500-.5z" fill="#fcc82c" />
          </svg>
        </StartButton>
        <Dots />
        <BarLabel>SDT_Bar<b>»</b></BarLabel>
        <Dots />
        <Tasks>
          <TaskButton aria-label="Chrome">
            <Icon crisp={false}>
              <circle cx="8" cy="8" r="7" fill="#f0c018" /><path d="M8 8L2 4.500A7 7 0 0 1 14 4.500z" fill="#e03c28" /><path d="M8 8l-.5 7A7 7 0 0 1 2 4.500z" fill="#3aa048" />
              <circle cx="8" cy="8" r="3.500" fill="#fff" /><circle cx="8" cy="8" r="2.600" fill="#4080e0" />
            </Icon>
          </TaskButton>
          <TaskButton aria-label="Keyboard">
            <Icon><path d="M0 3h16v10H0z" fill="#4a94e0" stroke="#b8dcff" /><path d="M2 5.500h12M2 8h12" stroke="#fff" strokeDasharray="1 1" /><path d="M4 11h8" stroke="#fff" /></Icon>
          </TaskButton>
          <TaskButton $on aria-label="SolidWorks"><SwLogo /></TaskButton>
          <TaskButton aria-label="Notepad">
            <Icon crisp={false}><path d="M3 2h11l-2 13H1z" fill="#a8dce8" stroke="#5c98a8" /><path d="M4 5h8M4 7h8M3.500 9h8M3 11h8" stroke="#70b0c0" /><path d="M3 2h11" stroke="#eee" strokeWidth="2" strokeDasharray="1 1" /></Icon>
          </TaskButton>
          <TaskButton aria-label="Paint">
            <Icon crisp={false}><path d="M1 6c2-5 12-5 14 0s-2 6-4 5-2 3-5 2-6-3-5-7z" fill="#d89850" stroke="#7a4818" /><circle cx="4.500" cy="6" r="1.500" fill="#e02020" /><circle cx="8" cy="4.500" r="1.500" fill="#2050e0" /><circle cx="11.500" cy="6" r="1.500" fill="#20a030" /><path d="M9 8l6 6" stroke="#222" strokeWidth="1.500" /></Icon>
          </TaskButton>
        </Tasks>
        <Tray>
          <svg width="7" height="4"><path d="M0 4h7L3.500 0z" fill="#ddd" /></svg>
          <Icon><path d="M4.500 4.500h10v7h-10zM7 14.500h6M9.500 12v2M1.500 2v3h3M2.500 5v9h4" fill="none" stroke="#fff" /></Icon>
          <Icon crisp={false}><path d="M1 6h3l5-4v12l-5-4H1z" fill="#ddd" /><circle cx="11.500" cy="11" r="4" fill="#e02020" /><path d="M9 8.500l5 5" stroke="#fff" strokeWidth="1.500" /></Icon>
          <Clock>7:16 PM</Clock>
          <ShowDesktop aria-label="Show desktop" />
        </Tray>
      </TaskBar>
    </Shell>
  );
}
